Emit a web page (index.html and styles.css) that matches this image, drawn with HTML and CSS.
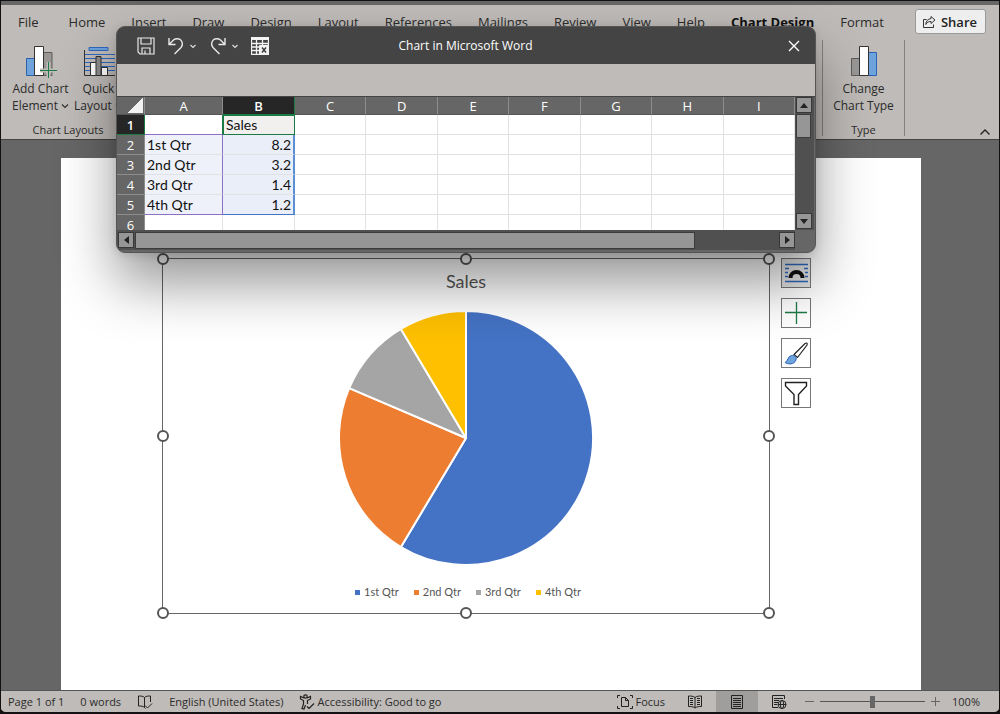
FILE: index.html
```html
<!DOCTYPE html>
<html lang="en">
<head>
<meta charset="utf-8">
<title>Chart in Microsoft Word</title>
<link rel="stylesheet" href="styles.css">
</head>
<body>
<div class="app">
  <header class="ribbon">
    <div class="tab-row">
      <nav class="tabs">
        <button class="file">File</button><button>Home</button><button>Insert</button><button>Draw</button><button>Design</button><button>Layout</button><button>References</button><button>Mailings</button><button>Review</button><button>View</button><button>Help</button><button class="active">Chart Design</button><button>Format</button>
      </nav>
      <button class="share">
        <svg width="14" height="14" viewBox="0 0 14 14" fill="none" stroke="#333"><path d="M4.500 4.500H1.500V12.500H11.500V9.500M9 1.500L13 5L9 8.500V6.500C6.500 6.300 5 7.300 3.800 9.500C4 6 5.800 3.900 9 3.600Z"/></svg>
        Share
      </button>
    </div>
    <div class="groups">
      <section class="group">
        <div class="commands">
          <button class="command">
            <svg width="34" height="34" viewBox="0 0 34 34"><path d="M19 8.500h9v23h-9z" fill="#999795" stroke="#5c5c5c"/><path d="M2.500 14.500h9v17h-9z" fill="#6ea3dc" stroke="#2b62a8"/><path d="M10.500 2.500h9v29h-9z" fill="#fff" stroke="#333"/><path d="M24.500 18v17M16 26.500h17" stroke="#bfbbb8" stroke-width="4"/><path d="M24.500 18v16M16 26.500h17" stroke="#1c7a44"/></svg>
            <span>Add Chart<br>Element <svg class="chev" viewBox="0 0 8 8"><path d="M1 2.500l3 3 3-3" fill="none" stroke="#333" stroke-width="1.200"/></svg></span>
          </button>
          <button class="command">
            <svg width="34" height="34" viewBox="0 0 34 34"><path d="M7 3.500h19v3h-19z" fill="#6ea3dc" stroke="#2f68bd"/><path d="M3 10.500h30M3 14.500h30M3 18.500h30M3 22.500h30M3 26.500h30" stroke="#2f68bd" stroke-width="1.200"/><path d="M2.500 6v25.500H33" fill="none" stroke="#333"/><path d="M8.500 18.500h6v13h-6z" fill="#fff" stroke="#333"/><path d="M14 12.500h5v19h-5z" fill="#8d8d8d" stroke="#333"/><path d="M19.500 23.500h6v8h-6z" fill="#fff" stroke="#333"/></svg>
            <span>Quick<br>Layout <svg class="chev" viewBox="0 0 8 8"><path d="M1 2.500l3 3 3-3" fill="none" stroke="#333" stroke-width="1.200"/></svg></span>
          </button>
        </div>
        <div class="group-name">Chart Layouts</div>
      </section>
      <section class="group type-group">
        <div class="commands">
          <button class="command">
            <svg width="34" height="34" viewBox="0 0 34 34"><path d="M4.500 14.500h9v17h-9z" fill="#999795" stroke="#5c5c5c"/><path d="M21.500 8.500h8v23h-8z" fill="#6ea3dc" stroke="#2b62b5"/><path d="M12.500 2.500h9v29h-9z" fill="#fff" stroke="#333"/></svg>
            <span>Change<br>Chart Type</span>
          </button>
        </div>
        <div class="group-name">Type</div>
      </section>
      <button class="collapse" aria-label="Collapse the ribbon"><svg width="12" height="8" viewBox="0 0 12 8"><path d="M1.500 6.500L6 2l4.500 4.500" fill="none" stroke="#222" stroke-width="1.300"/></svg></button>
    </div>
  </header>

  <main class="canvas">
    <article class="page">
      <figure class="chart">
        <i class="handle nw"></i><i class="handle n"></i><i class="handle ne"></i><i class="handle w"></i><i class="handle e"></i><i class="handle sw"></i><i class="handle s"></i><i class="handle se"></i>
        <figcaption>Sales</figcaption>
        <svg class="pie" viewBox="-128 -128 256 256" stroke="#fff" stroke-width="2" stroke-linejoin="round">
          <path fill="#4472c4" d="M0 0V-127A127 127 0 1 1 -65.100 109Z"/>
          <path fill="#ed7d31" d="M0 0L-65.100 109A127 127 0 0 1 -116.800 -49.900Z"/>
          <path fill="#a5a5a5" d="M0 0L-116.800 -49.900A127 127 0 0 1 -65.100 -109Z"/>
          <path fill="#ffc000" d="M0 0L-65.100 -109A127 127 0 0 1 0 -127Z"/>
        </svg>
        <ul class="legend">
          <li class="q1">1st Qtr</li><li class="q2">2nd Qtr</li><li class="q3">3rd Qtr</li><li class="q4">4th Qtr</li>
        </ul>
      </figure>
      <div class="chart-tools">
        <button class="on" aria-label="Layout options"><svg width="26" height="26" viewBox="0 0 26 26" fill="none"><path d="M2 4.500h23M2 8.500h4M21 8.500h4M2 12.500h3M22 12.500h3M2 16.500h3M22 16.500h3M2 21.500h23" stroke="#2f68bd" stroke-width="1.300"/><path d="M7.500 18a6 6 0 0 1 12 0" stroke="#111" stroke-width="4"/></svg></button>
        <button aria-label="Chart elements"><svg width="26" height="26" viewBox="0 0 26 26"><path d="M13.500 2v22M2 12.500h22" stroke="#1c7a44" stroke-width="1.300"/></svg></button>
        <button aria-label="Chart styles"><svg width="26" height="26" viewBox="0 0 26 26"><path d="M11 14.500L22 3.500Q25 2 24 5L14.500 17.500Z" fill="#fff" stroke="#222" stroke-width="1.200"/><path d="M2 22.500C5 22 4.500 16 8.500 15.500C11.500 15 14 17 13 20C11 25 5 24.500 2 22.500Z" fill="#6ea3dc" stroke="#2b62b5"/></svg></button>
        <button aria-label="Chart filters"><svg width="26" height="26" viewBox="0 0 26 26"><path d="M2.500 2.500H23.500V6L15.500 14.500V24.500H11V14.500L2.500 6Z" fill="#fff" stroke="#222" stroke-width="1.400"/></svg></button>
      </div>
    </article>
  </main>

  <footer class="status">
    <span>Page 1 of 1</span>
    <span>0 words</span>
    <svg width="16" height="16" viewBox="0 0 16 16" fill="none" stroke="#222"><path d="M7.500 13.500C6 12 4 12 1.500 12V2C4 2 6 2 7.500 3.500V13.500L8.500 14.500M7.500 3.500C9 2 11 2 13.500 2V8M8 11.500L10.500 14L15 9.500"/></svg>
    <span>English (United States)</span>
    <span class="pair"><svg width="16" height="16" viewBox="0 0 16 16" fill="none" stroke="#222" stroke-width="1.200"><circle cx="6.500" cy="2.500" r="1.700"/><path d="M5 4L1.500 2.500V5L4.500 6.500V10L3 14.500L5 15L6.500 11M8 4L11.500 2.500V5L8.500 6.500V10M8 12.500L10 14.500L15 9.500"/></svg>Accessibility: Good to go</span>
    <button class="pair focus"><svg width="16" height="16" viewBox="0 0 16 16" fill="none" stroke="#222"><path d="M3 1.500H.500V4M13 1.500H15.500V4M.500 12V14.500H3M15.500 12V14.500H13M4.500 3.500H8.500L11.500 6.500V12.500H4.500ZM8.500 3.500V6.500H11.500"/></svg>Focus</button>
    <div class="views">
      <button aria-label="Read mode"><svg width="16" height="16" viewBox="0 0 16 16" fill="none" stroke="#222"><path d="M8 14C6 12.500 4 12.500 1.500 12.500V2C4 2 6 2 8 3.500C10 2 12 2 14.500 2V12.500C12 12.500 10 12.500 8 14ZM8 3.500V14M3 4.500h3M3 6.500h3M3 8.500h3M3 10.500h3M10 4.500h3M10 6.500h3M10 8.500h3M10 10.500h3"/></svg></button>
      <button class="on" aria-label="Print layout"><svg width="16" height="16" viewBox="0 0 16 16" fill="none" stroke="#222"><path d="M2.500 1.500h11v13h-11zM4 4.500h8M4 6.500h8M4 8.500h8M4 10.500h8M4 12.500h8"/></svg></button>
      <button aria-label="Web layout"><svg width="16" height="16" viewBox="0 0 16 16" fill="none" stroke="#222"><path d="M7 13.500H1.500V1.500H13.500V5M3 4.500h9M3 6.500h5M3 8.500h4M3 10.500h3"/><circle cx="11" cy="10.500" r="4" fill="#bfbbb8"/><ellipse cx="11" cy="10.500" rx="1.700" ry="4"/><path d="M7 10.500h8"/></svg></button>
    </div>
    <div class="zoom">
      <button aria-label="Zoom out"><svg width="9" height="9" viewBox="0 0 9 9"><path d="M0 4.500h9" stroke="#666"/></svg></button>
      <input type="range" min="0" max="100" value="50" aria-label="Zoom">
      <button aria-label="Zoom in"><svg width="9" height="9" viewBox="0 0 9 9"><path d="M0 4.500h9M4.500 0v9" stroke="#666"/></svg></button>
    </div>
    <span>100%</span>
  </footer>

  <section class="sheet-window" role="dialog" aria-labelledby="sheet-title">
    <header class="titlebar">
      <div class="quick">
        <button aria-label="Save"><svg width="18" height="18" viewBox="0 0 18 18" fill="none" stroke="#e8e8e8" stroke-width="1.200"><path d="M1 1H17V17H3L1 15ZM4 1V7H14V1M5 17V11H13V17M8 13.500V17"/></svg></button>
        <button class="split" aria-label="Undo"><svg width="18" height="18" viewBox="0 0 18 18" fill="none" stroke="#e8e8e8" stroke-width="1.400"><path d="M2 1V7.500H8.500M2 7.500L6.500 3C9 1 13 1.500 14.500 4C16 6.500 15.500 8.500 14 10.500L7.500 17"/></svg><svg class="chev" viewBox="0 0 8 8"><path d="M1.500 3L4 5.500 6.500 3" fill="none" stroke="#ddd" stroke-width="1.200"/></svg></button>
        <button class="split" aria-label="Redo"><svg width="18" height="18" viewBox="0 0 18 18" fill="none" stroke="#e8e8e8" stroke-width="1.400"><path d="M16 1V7.500H9.500M16 7.500L11.500 3C9 1 5 1.500 3.500 4C2 6.500 2.500 8.500 4 10.500L10.500 17"/></svg><svg class="chev" viewBox="0 0 8 8"><path d="M1.500 3L4 5.500 6.500 3" fill="none" stroke="#ddd" stroke-width="1.200"/></svg></button>
        <button aria-label="Edit data in Excel"><svg width="18" height="18" viewBox="0 0 18 18" fill="none" stroke="#f2f2f2"><path d="M.500 .500H17.500V17.500H.500ZM.500 6.500H17.500M.500 10H8M.500 13.500H8M5.500 3V17.500M11.500 3V8" stroke-width="1.300"/><path d="M.500 .500h17v2h-17z" fill="#f2f2f2"/><path d="M8.500 8.500h9v9h-9z" fill="#f2f2f2"/><path d="M11 10.500L15 15.500M15 10.500L11 15.500" stroke="#333" stroke-width="1.300"/></svg></button>
      </div>
      <h1 id="sheet-title">Chart in Microsoft Word</h1>
      <button class="close" aria-label="Close"><svg width="12" height="12" viewBox="0 0 12 12"><path d="M1 1L11 11M11 1L1 11" stroke="#fff" stroke-width="1.400"/></svg></button>
    </header>
    <div class="band"></div>
    <div class="grid-area">
      <div class="grid-clip">
        <table class="grid">
          <colgroup><col class="col-row"><col class="col-a"><col class="col-b"><col><col><col><col><col><col><col></colgroup>
          <thead><tr><th class="corner"></th><th>A</th><th class="picked">B</th><th>C</th><th>D</th><th>E</th><th>F</th><th>G</th><th>H</th><th>I</th></tr></thead>
          <tbody>
            <tr><th class="picked">1</th><td class="above-cat"></td><td class="current">Sales</td><td></td><td></td><td></td><td></td><td></td><td></td><td></td></tr>
            <tr><th>2</th><td class="cat">1st Qtr</td><td class="val">8.2</td><td></td><td></td><td></td><td></td><td></td><td></td><td></td></tr>
            <tr><th>3</th><td class="cat">2nd Qtr</td><td class="val">3.2</td><td></td><td></td><td></td><td></td><td></td><td></td><td></td></tr>
            <tr><th>4</th><td class="cat">3rd Qtr</td><td class="val">1.4</td><td></td><td></td><td></td><td></td><td></td><td></td><td></td></tr>
            <tr><th>5</th><td class="cat last">4th Qtr</td><td class="val last">1.2</td><td></td><td></td><td></td><td></td><td></td><td></td><td></td></tr>
            <tr><th>6</th><td></td><td></td><td></td><td></td><td></td><td></td><td></td><td></td><td></td></tr>
          </tbody>
        </table>
      </div>
      <div class="vscroll">
        <button aria-label="Scroll up"><svg width="8" height="5" viewBox="0 0 8 5"><path d="M0 5L4 0L8 5Z" fill="#222"/></svg></button>
        <div class="thumb"></div>
        <button aria-label="Scroll down"><svg width="8" height="5" viewBox="0 0 8 5"><path d="M0 0L4 5L8 0Z" fill="#222"/></svg></button>
      </div>
    </div>
    <div class="hscroll">
      <button aria-label="Scroll left"><svg width="5" height="8" viewBox="0 0 5 8"><path d="M5 0L0 4L5 8Z" fill="#222"/></svg></button>
      <div class="track"><div class="thumb"></div></div>
      <button aria-label="Scroll right"><svg width="5" height="8" viewBox="0 0 5 8"><path d="M0 0L5 4L0 8Z" fill="#222"/></svg></button>
    </div>
  </section>
</div>
</body>
</html>
```
FILE: styles.css
```css
* { box-sizing: border-box; }
body {
  margin: 0;
  background: #111;
  color: #2b2b2b;
  font: 12px/16px "Open Sans", "Noto Sans", sans-serif;
}
button {
  margin: 0;
  padding: 0;
  border: 0;
  background: none;
  color: inherit;
  font: inherit;
}
svg { display: block; flex: none; }
.app {
  position: relative;
  display: flex;
  flex-direction: column;
  height: 100vh;
  overflow: hidden;
  border: 1px solid #111;
  border-bottom-width: 2px;
  border-radius: 0 0 6px 6px;
  background: #666;
}
.chev { display: inline-block; width: 8px; height: 8px; }

/* Ribbon */
.ribbon {
  margin-top: 4px;
  background: #bfbbb8;
  border-bottom: 1px solid #444;
  font-size: 12px;
}
.tab-row {
  display: flex;
  justify-content: space-between;
  align-items: center;
  height: 33px;
  padding: 0 13px 0 17px;
}
.tabs { display: flex; gap: 26px; font-size: 13px; white-space: nowrap; }
.tabs .file { margin-right: 4px; }
.tabs .active { font-weight: 700; color: #111; }
.share {
  display: flex;
  align-items: center;
  gap: 5px;
  height: 25px;
  padding: 0 8px 0 6px;
  border: 1px solid #999;
  border-radius: 3px;
  background: #eee;
  color: #222;
  font-size: 13px;
  font-weight: 600;
}
.groups { display: flex; height: 101px; padding-top: 2px; }
.group {
  display: flex;
  flex-direction: column;
  justify-content: space-between;
  height: 96px;
}
.type-group {
  width: 83px;
  margin-left: auto;
  border: solid #858380;
  border-width: 0 1px;
}
.commands { display: flex; justify-content: center; gap: 5px; padding: 4px 0 0 11px; }
.type-group .commands { padding-left: 0; }
.command {
  display: flex;
  flex-direction: column;
  align-items: center;
  gap: 2px;
  line-height: 17px;
  white-space: nowrap;
}
.group-name { padding-left: 12px; font-size: 11px; line-height: 13px; text-align: center; }
.type-group .group-name { padding-left: 0; }
.collapse { align-self: flex-end; margin: 0 8px 3px 74px; }

/* Document */
.canvas { flex: 1; min-height: 0; padding: 18px 78px 0 60px; }
.page {
  display: flex;
  align-items: flex-start;
  gap: 11px;
  height: 100%;
  padding: 100px 110px 0 101px;
  background: #fff;
}
.chart {
  position: relative;
  flex: 1;
  display: flex;
  flex-direction: column;
  align-items: center;
  height: 356px;
  margin: 0;
  border: 1px solid #666;
  color: #555;
  font-family: Lato, "Open Sans", sans-serif;
}
.chart figcaption { margin-top: 10px; font-size: 18px; line-height: 24px; }
.pie { width: 256px; height: 256px; margin-top: 17px; }
.legend {
  display: flex;
  gap: 15px;
  margin: 18px 0 0;
  padding: 0 0 0 4px;
  list-style: none;
  font-size: 11px;
}
.legend li { display: flex; align-items: center; gap: 4px; }
.legend li::before { content: ""; width: 5px; height: 5px; }
.q1::before { background: #4472c4; }
.q2::before { background: #ed7d31; }
.q3::before { background: #a5a5a5; }
.q4::before { background: #ffc000; }
.handle {
  position: absolute;
  width: 12px;
  height: 12px;
  margin: -6px;
  border: 2px solid #555;
  border-radius: 50%;
  background: #fff;
}
.nw, .n, .ne { top: 0; }
.w, .e { top: 50%; }
.sw, .s, .se { top: 100%; }
.nw, .w, .sw { left: 0; }
.n, .s { left: 50%; }
.ne, .e, .se { left: 100%; }
.chart-tools { display: flex; flex-direction: column; gap: 10px; }
.chart-tools button {
  display: grid;
  place-items: center;
  width: 30px;
  height: 30px;
  border: 1px solid #777;
  background: #fff;
}
.chart-tools .on { background: #e6e6e6; }

/* Status bar */
.status {
  display: flex;
  align-items: center;
  gap: 16px;
  height: 22px;
  padding: 0 19px 0 7px;
  border-top: 1px solid #555;
  background: #bfbbb8;
  font-size: 11px;
  white-space: nowrap;
}
.pair { display: flex; align-items: center; gap: 2px; }
.focus { margin-left: auto; }
.views { display: flex; align-self: stretch; margin: 0 -11px 0 -7px; }
.views button { display: grid; place-items: center; width: 42px; }
.views .on { background: #a09e9c; }
.zoom { display: flex; align-items: center; gap: 6px; margin-right: -4px; }
.zoom input {
  width: 105px;
  height: 14px;
  margin: 0;
  appearance: none;
  background: linear-gradient(#555, #555) center / 100% 1px no-repeat;
}
.zoom input::-webkit-slider-thumb {
  appearance: none;
  width: 5px;
  height: 12px;
  background: #666;
}

/* Sheet window */
.sheet-window {
  position: absolute;
  top: 25px;
  left: 115px;
  right: 183px;
  overflow: hidden;
  border: 1px solid #555;
  border-radius: 9px;
  background: #666;
  box-shadow: 0 30px 56px rgba(0, 0, 0, .42), 0 2px 10px rgba(0, 0, 0, .12);
}
.titlebar {
  display: grid;
  grid-template-columns: 1fr auto 1fr;
  align-items: center;
  height: 37px;
  padding: 0 15px 0 20px;
  background: #444;
  color: #fff;
}
.titlebar h1 { margin: 0 6px 0 0; font-size: 12px; font-weight: 400; line-height: 18px; }
.quick { display: flex; align-items: center; gap: 12px; }
.split { display: flex; align-items: center; gap: 4px; }
.close { justify-self: end; }
.band { height: 33px; border-bottom: 1px solid #444; background: #bfbbb8; }
.grid-area { display: flex; height: 133px; }
.grid-clip { flex: 1; min-width: 0; overflow: hidden; background: #fff; }
.grid {
  width: 100%;
  table-layout: fixed;
  border-collapse: separate;
  border-spacing: 0;
  color: #111;
  font: 14px/18px Lato, "Open Sans", sans-serif;
}
.col-row { width: 28px; }
.col-a { width: 78px; }
.col-b { width: 72px; }
.grid th, .grid td { height: 20px; padding: 0 2px; white-space: nowrap; }
.grid th {
  border: solid #8d8d8d;
  border-width: 0 1px 1px 0;
  background: #666;
  color: #fff;
  font: 13px/16px "Open Sans", sans-serif;
}
.grid thead th { height: 18px; border-bottom-color: #555; }
.grid .picked { background: #262626; font-weight: 600; border-color: #1c7a44; }
.grid .corner { background: linear-gradient(135deg, transparent 50%, #f2f2f2 50%) right 1px bottom 1px / 16px 15px no-repeat #666; }
.grid td { border: solid #e2e2e2; border-width: 0 1px 1px 0; }
.grid .above-cat { border-right-color: #1c7a44; border-bottom-color: #9070c4; }
.grid .current { border: 1px solid #1c7a44; background: #f2f0ef; }
.grid .cat { border-right-color: #9070c4; background: #eef1fa; }
.grid .val { border-right: 2px solid #5b8fd4; background: #e9eef9; text-align: right; }
.grid .cat.last { border-bottom-color: #9070c4; }
.grid .val.last { border-bottom-color: #4472c4; }
.vscroll, .hscroll { display: flex; background: #505050; }
.vscroll { flex-direction: column; width: 20px; padding: 0 3px 1px 1px; border-right: 1px solid #666; }
.vscroll button, .hscroll button {
  display: grid;
  place-items: center;
  flex: none;
  width: 16px;
  height: 16px;
  border: 1px solid #383838;
  background: #969696;
}
.sheet-window .thumb { border: 1px solid #3c3c3c; background: #969696; }
.vscroll .thumb { height: 24px; margin: 1px 0 auto; }
.hscroll { margin: 0 20px 2px 0; padding: 2px 0 1px 1px; }
.track { flex: 1; padding-left: 1px; }
.track .thumb { width: 87%; height: 17px; }
```
